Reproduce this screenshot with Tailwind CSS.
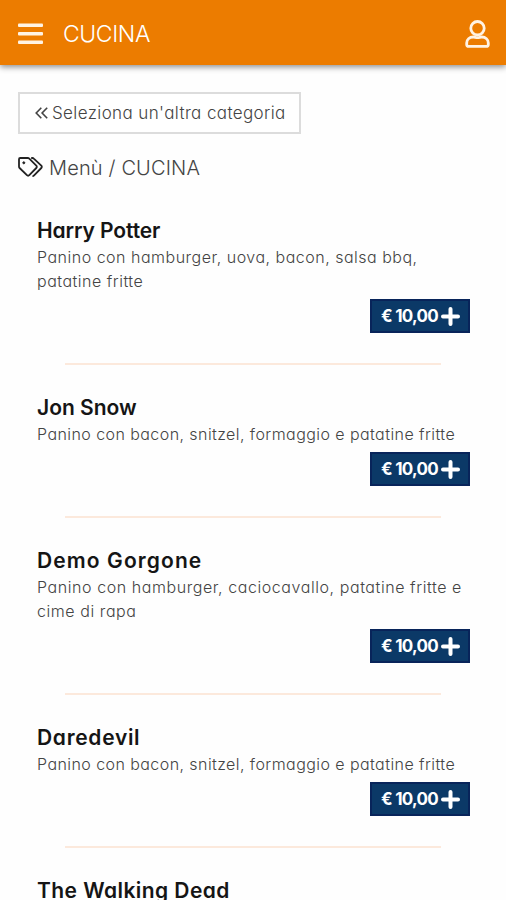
<!DOCTYPE html>
<html lang="it">
<head>
  <meta charset="utf-8" />
  <title>CUCINA</title>
  <meta name="viewport" content="width=device-width, initial-scale=1" />
  <script src="https://cdn.jsdelivr.net/npm/@tailwindcss/browser@4"></script>
</head>

<body class="h-[900px] overflow-hidden bg-[#fefefe] font-['Inter',sans-serif] [font-feature-settings:'cv11'] text-[#444]">
  <!-- Top bar -->
  <header class="relative flex h-[65px] items-center bg-[#ec7c00] pl-[18px] pr-4 pt-[3px] text-white shadow-[0_2px_6px_rgba(0,0,0,0.45)]">
    <svg class="h-[22px] w-[25px]" viewBox="0 0 25 22" fill="#fff3e4">
      <rect y="0.5" width="25" height="3.4" rx="1" />
      <rect y="9" width="25" height="3.4" rx="1" />
      <rect y="17.5" width="25" height="3.4" rx="1" />
    </svg>
    <h1 class="ml-5 whitespace-nowrap pt-px text-[23px] font-light tracking-[-0.4px]">CUCINA</h1>
    <svg class="ml-auto h-7 w-[25px]" viewBox="0 0 25 28" fill="none" stroke="#fff3e4" stroke-width="2.8">
      <circle cx="12.5" cy="8.2" r="6.7" />
      <path d="M8.3 17C4.4 17 1.7 19.6 1.7 23v1.4c0 1.2.9 2 2.1 2h17.4c1.2 0 2.1-.8 2.1-2V23c0-3.4-2.7-6-6.6-6-1.5 0-2.4.6-4.2.6s-2.7-.6-4.2-.6z" />
    </svg>
  </header>

  <main class="px-[18px] pt-[27px]">
    <a class="flex h-[42px] w-[283px] items-center whitespace-nowrap border-2 border-[#dcdcdc] bg-white pl-[15px]">
      <svg class="h-3 w-[13px]" viewBox="0 0 13 12" fill="none" stroke="#444" stroke-width="1.6">
        <path d="M6.3 .8 1.2 6l5.1 5.2M12.2.8 7.1 6l5.1 5.2" />
      </svg>
      <span class="ml-1 pt-px text-[17px] font-light tracking-[0.38px]">Seleziona un'altra categoria</span>
    </a>

    <div class="mt-[19px] flex h-7 items-center whitespace-nowrap">
      <svg class="h-5 w-[25px]" viewBox="0 0 25 20" fill="none" stroke="#222" stroke-width="1.8" stroke-linejoin="round">
        <path d="M1 2.2C1 1.5 1.5 1 2.2 1h7.6c.6 0 1.1.2 1.5.6l7 7c.7.7.7 1.7 0 2.4l-7 7.2c-.7.7-1.7.7-2.4 0L1.6 11c-.4-.4-.6-.9-.6-1.5z" />
        <path d="M13.2 1h1.2c.6 0 1 .2 1.4.6l7.5 7c.7.7.7 1.7 0 2.4l-7.2 7.4c-.5.5-1 .7-1.6.6" />
        <circle cx="5.8" cy="5.8" r="1" fill="#222" stroke-width="1" />
      </svg>
      <span class="ml-1.5 pt-px text-[20px] font-light tracking-[0.15px]">Menù / CUCINA</span>
    </div>

    <!-- Dishes -->
    <div class="mt-[37px] px-[19px]">
      <article class="h-[177px] whitespace-nowrap">
        <h2 class="h-[26px] text-[21px] leading-[26px] font-semibold tracking-[-0.1px] text-[#151515]">Harry Potter</h2>
        <p class="mt-px text-[16px] leading-6 font-light tracking-[0.5px]">Panino con hamburger, uova, bacon, salsa bbq,<br />patatine fritte</p>
        <div class="-mr-px mt-1.5 flex justify-end">
          <button class="flex h-[34px] w-[100px] items-center border-2 border-[#08245a] bg-[#0b3967] pl-2 text-white">
            <span class="w-[59px] pt-0.5 text-[17px] font-bold tracking-[-0.7px]">€ 10,00</span>
            <svg class="ml-0.5 h-[19px] w-[19px]" viewBox="0 0 19 19" stroke="#fff" stroke-width="4" stroke-linecap="round"><path d="M9.5 2v15M2 9.5h15" /></svg>
          </button>
        </div>
        <hr class="mx-7 mt-[30px] h-0.5 border-0 bg-[#fce9dc]" />
      </article>

      <article class="h-[153px] whitespace-nowrap">
        <h2 class="h-[26px] text-[21px] leading-[26px] font-semibold text-[#151515]">Jon Snow</h2>
        <p class="mt-px text-[16px] leading-6 font-light tracking-[0.43px]">Panino con bacon, snitzel, formaggio e patatine fritte</p>
        <div class="-mr-px mt-1.5 flex justify-end">
          <button class="flex h-[34px] w-[100px] items-center border-2 border-[#08245a] bg-[#0b3967] pl-2 text-white">
            <span class="w-[59px] pt-0.5 text-[17px] font-bold tracking-[-0.7px]">€ 10,00</span>
            <svg class="ml-0.5 h-[19px] w-[19px]" viewBox="0 0 19 19" stroke="#fff" stroke-width="4" stroke-linecap="round"><path d="M9.5 2v15M2 9.5h15" /></svg>
          </button>
        </div>
        <hr class="mx-7 mt-[30px] h-0.5 border-0 bg-[#fce9dc]" />
      </article>

      <article class="h-[177px] whitespace-nowrap">
        <h2 class="h-[26px] text-[21px] leading-[26px] font-semibold tracking-[1.1px] text-[#151515]">Demo Gorgone</h2>
        <p class="mt-px text-[16px] leading-6 font-light tracking-[0.57px]">Panino con hamburger, caciocavallo, patatine fritte e<br />cime di rapa</p>
        <div class="-mr-px mt-1.5 flex justify-end">
          <button class="flex h-[34px] w-[100px] items-center border-2 border-[#08245a] bg-[#0b3967] pl-2 text-white">
            <span class="w-[59px] pt-0.5 text-[17px] font-bold tracking-[-0.7px]">€ 10,00</span>
            <svg class="ml-0.5 h-[19px] w-[19px]" viewBox="0 0 19 19" stroke="#fff" stroke-width="4" stroke-linecap="round"><path d="M9.5 2v15M2 9.5h15" /></svg>
          </button>
        </div>
        <hr class="mx-7 mt-[30px] h-0.5 border-0 bg-[#fce9dc]" />
      </article>

      <article class="h-[153px] whitespace-nowrap">
        <h2 class="h-[26px] text-[21px] leading-[26px] font-semibold tracking-[0.7px] text-[#151515]">Daredevil</h2>
        <p class="mt-px text-[16px] leading-6 font-light tracking-[0.43px]">Panino con bacon, snitzel, formaggio e patatine fritte</p>
        <div class="-mr-px mt-1.5 flex justify-end">
          <button class="flex h-[34px] w-[100px] items-center border-2 border-[#08245a] bg-[#0b3967] pl-2 text-white">
            <span class="w-[59px] pt-0.5 text-[17px] font-bold tracking-[-0.7px]">€ 10,00</span>
            <svg class="ml-0.5 h-[19px] w-[19px]" viewBox="0 0 19 19" stroke="#fff" stroke-width="4" stroke-linecap="round"><path d="M9.5 2v15M2 9.5h15" /></svg>
          </button>
        </div>
        <hr class="mx-7 mt-[30px] h-0.5 border-0 bg-[#fce9dc]" />
      </article>

      <article class="whitespace-nowrap">
        <h2 class="h-[26px] text-[21px] leading-[26px] font-semibold tracking-[0.43px] text-[#151515]">The Walking Dead</h2>
      </article>
    </div>
  </main>
</body>

</html>
